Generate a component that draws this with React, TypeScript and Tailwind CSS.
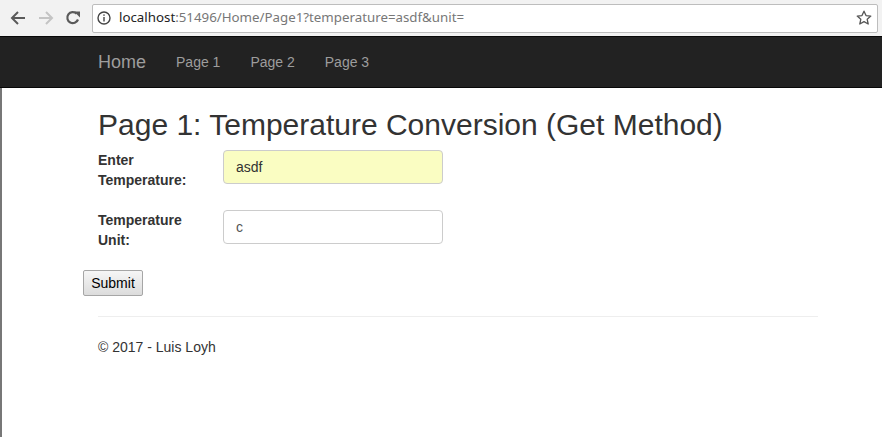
import React from 'react'

function BrowserBar() {
  return (
    <div className="flex h-[36px] items-center bg-[#f2f2f2]">
      <div className="flex w-[92px] items-center">
        <svg width="16" height="16" viewBox="0 0 16 16" className="ml-[10px]">
          <path d="M15 8H2.5M8 2L2 8l6 6" fill="none" stroke="#5a5a5a" strokeWidth="2" />
        </svg>
        <svg width="16" height="16" viewBox="0 0 16 16" className="ml-[12px]">
          <path d="M1 8h12.5M8 2l6 6-6 6" fill="none" stroke="#c4c4c4" strokeWidth="2" />
        </svg>
        <svg width="16" height="16" viewBox="0 0 16 16" className="ml-[11px]">
          <path d="M13 9.5A5.5 5.5 0 1 1 11.6 3.6" fill="none" stroke="#5a5a5a" strokeWidth="2.2" />
          <path d="M9 1.5h6v6z" fill="#5a5a5a" />
        </svg>
      </div>
      <div className="flex h-[29px] w-[786px] items-center rounded-[2px] border border-[#bdbdbd] bg-white">
        <svg width="14" height="14" viewBox="0 0 14 14" className="ml-[4px]">
          <circle cx="7" cy="7" r="6" fill="none" stroke="#444" strokeWidth="1.4" />
          <rect x="6.3" y="6" width="1.4" height="4.5" fill="#444" />
          <rect x="6.3" y="3.4" width="1.4" height="1.4" fill="#444" />
        </svg>
        <span className="ml-[8px] text-[13.3px] text-[#777]" style={{ fontFamily: '"Noto Sans", sans-serif' }}>
          <span className="text-[#222]">localhost</span>:51496/Home/Page1?temperature=asdf&amp;unit=
        </span>
        <svg width="16" height="16" viewBox="0 0 16 16" className="ml-auto mr-[5px]">
          <path d="M8 1.2l2 4.4 4.8.5-3.6 3.2 1 4.7L8 11.6 3.8 14l1-4.7L1.2 6.1 6 5.6z" fill="none" stroke="#555" strokeWidth="1.3" strokeLinejoin="round" />
        </svg>
      </div>
    </div>
  )
}

export default function App() {
  return (
    <div className="h-[437px] overflow-hidden bg-white text-[14px] text-[#333]" style={{ fontFamily: '"Liberation Sans", Arial, sans-serif' }}>
      <BrowserBar />
      <nav className="h-[52px] border-t border-b border-[#080808] bg-[#222]">
        <div className="ml-[83px] flex h-[50px] items-center px-[15px] text-[#9d9d9d]">
          <span className="text-[18px]">Home</span>
          <span className="ml-[30px]">Page 1</span>
          <span className="ml-[30px]">Page 2</span>
          <span className="ml-[30px]">Page 3</span>
        </div>
      </nav>
      <div className="h-full border-l-2 border-[#777] pt-[19px]">
        <div className="ml-[81px] w-[750px] px-[15px]">
          <h1 className="text-[30px] leading-[36px] text-[#333]">Page 1: Temperature Conversion (Get Method)</h1>
          <div className="mt-[7px] flex items-start">
            <label className="w-[125px] font-bold leading-[20px]">Enter<br />Temperature:</label>
            <div className="flex h-[34px] w-[220px] items-center rounded-[4px] border border-[#ccc] bg-[#fafdc2] px-[12px] text-[#333]">asdf</div>
          </div>
          <div className="mt-[20px] flex items-start">
            <label className="w-[125px] font-bold leading-[20px]">Temperature<br />Unit:</label>
            <div className="flex h-[34px] w-[220px] items-center rounded-[4px] border border-[#ccc] bg-white px-[12px] text-[#555]">c</div>
          </div>
          <button className="-ml-[15px] mt-[20px] block h-[26px] w-[60px] rounded-[2px] border border-[#a6a6a6] bg-gradient-to-b from-[#f6f6f6] to-[#dcdcdc] text-[14px] text-black">Submit</button>
          <hr className="mt-[20px] border-t border-[#eee]" />
          <p className="mt-[20px] leading-[20px]">© 2017 - Luis Loyh</p>
        </div>
      </div>
    </div>
  )
}
